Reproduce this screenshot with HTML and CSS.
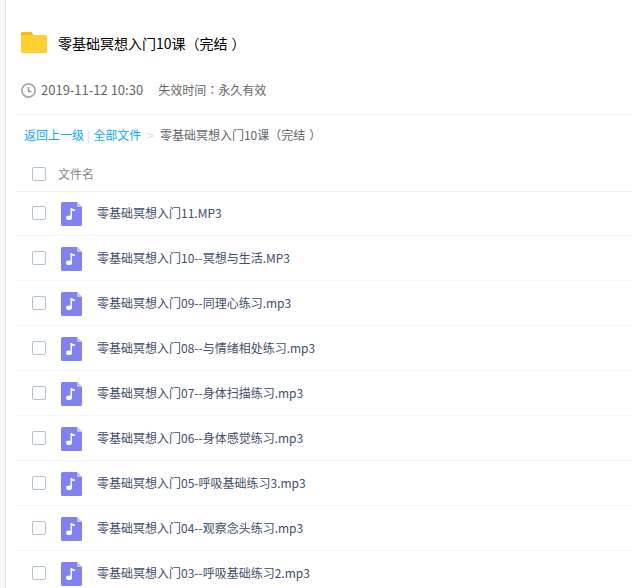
FILE: index.html
```html
<!DOCTYPE html>
<html lang="zh-CN">
<head>
<meta charset="utf-8">
<title>零基础冥想入门10课（完结）</title>
<link rel="stylesheet" href="styles.css">
</head>
<body>
<svg class="defs" aria-hidden="true">
  <symbol id="audio" viewBox="0 0 21 24">
    <path fill="#8181ef" d="M1.5 0H16l5 5v17.5a1.5 1.5 0 0 1-1.5 1.5h-18A1.5 1.5 0 0 1 0 22.500v-21A1.500 1.500 0 0 1 1.500 0z"/>
    <path fill="#c4c4f9" d="M16 0l5 5h-4a1 1 0 0 1-1-1z"/>
    <ellipse cx="8" cy="15.700" rx="3" ry="2.300" fill="#fff"/>
    <path fill="#fff" d="M9.500 6h1.500c.3 1 1.300 1.200 2.800 1.300v1.900c-1.200 0-2.200-.2-2.800-.6V16H9.500z"/>
  </symbol>
</svg>
<main class="page">
  <header class="share">
    <h1 class="title">
      <svg class="folder" viewBox="0 0 26 21" aria-hidden="true"><path fill="#f5ba0c" d="M1.500 0H10.500L12.500 3V6H0V1.500A1.500 1.500 0 0 1 1.500 0z"/><path fill="#ffd02f" d="M0 3H24.500A1.500 1.500 0 0 1 26 4.500v15a1.500 1.500 0 0 1-1.500 1.500h-23A1.500 1.500 0 0 1 0 19.500z"/></svg>
      <span>零基础冥想入门10课（完结<span class="close">）</span></span>
    </h1>
    <div class="meta">
      <svg class="clock" viewBox="0 0 15 15" aria-hidden="true"><circle cx="7.500" cy="7.500" r="6.600" fill="none" stroke="#aaa" stroke-width="1.800"/><path d="M7.500 4v4.500h3" fill="none" stroke="#999" stroke-width="1.600"/></svg>
      <time class="date">2019-11-12 10:30</time>
      <span>失效时间<span class="colon" lang="zh-TW">：</span>永久有效</span>
    </div>
  </header>
  <nav class="crumbs">
    <a href="#">返回上一级</a><span class="bar">|</span><a href="#">全部文件</a><span class="arrow">&gt;</span><span>零基础冥想入门10课（完结<span class="close">）</span></span>
  </nav>
  <div class="head"><input type="checkbox" id="all"><label for="all">文件名</label></div>
  <ul class="files">
    <li><input type="checkbox" id="f11"><svg class="icon" aria-hidden="true"><use href="#audio"/></svg><label for="f11">零基础冥想入门11.MP3</label></li>
    <li><input type="checkbox" id="f10"><svg class="icon" aria-hidden="true"><use href="#audio"/></svg><label for="f10">零基础冥想入门10--冥想与生活.MP3</label></li>
    <li><input type="checkbox" id="f09"><svg class="icon" aria-hidden="true"><use href="#audio"/></svg><label for="f09">零基础冥想入门09--同理心练习.mp3</label></li>
    <li><input type="checkbox" id="f08"><svg class="icon" aria-hidden="true"><use href="#audio"/></svg><label for="f08">零基础冥想入门08--与情绪相处练习.mp3</label></li>
    <li><input type="checkbox" id="f07"><svg class="icon" aria-hidden="true"><use href="#audio"/></svg><label for="f07">零基础冥想入门07--身体扫描练习.mp3</label></li>
    <li><input type="checkbox" id="f06"><svg class="icon" aria-hidden="true"><use href="#audio"/></svg><label for="f06">零基础冥想入门06--身体感觉练习.mp3</label></li>
    <li><input type="checkbox" id="f05"><svg class="icon" aria-hidden="true"><use href="#audio"/></svg><label for="f05">零基础冥想入门05-呼吸基础练习3.mp3</label></li>
    <li><input type="checkbox" id="f04"><svg class="icon" aria-hidden="true"><use href="#audio"/></svg><label for="f04">零基础冥想入门04--观察念头练习.mp3</label></li>
    <li><input type="checkbox" id="f03"><svg class="icon" aria-hidden="true"><use href="#audio"/></svg><label for="f03">零基础冥想入门03--呼吸基础练习2.mp3</label></li>
  </ul>
</main>
</body>
</html>
```
FILE: styles.css
```css
* { box-sizing: border-box; }

body {
  margin: 0;
  overflow: hidden;
  background: #f7f7f7;
  color: #666;
  font: 12px/20px "Noto Sans CJK SC", sans-serif;
}

.defs { display: none; }

.page {
  height: 100vh;
  overflow: hidden;
  margin-left: 5px;
  padding-left: 10px;
  border-left: 1px solid #e0e0e0;
  background: #fff;
}

.share {
  padding: 29px 0 14px 5px;
  border-bottom: 1px solid #f2f2f2;
}

.title {
  display: flex;
  align-items: center;
  gap: 11px;
  height: 27px;
  margin: 0;
  color: #000;
  font-size: 14px;
  font-weight: 400;
}

.folder { width: 26px; height: 21px; }

.close { margin-left: 4px; }

.meta {
  display: flex;
  align-items: center;
  gap: 5px;
  margin-top: 24px;
}

.clock { width: 15px; height: 15px; }

.date {
  margin-right: 10px;
  font-size: 13px;
}

.colon { font-family: "Noto Sans CJK TC", sans-serif; }

.crumbs {
  display: flex;
  height: 42px;
  padding-left: 8px;
  line-height: 40px;
}

.crumbs a { color: #09aaff; text-decoration: none; }
.bar { padding: 0 3px; color: #c4dbfe; }
.arrow { padding: 0 6px; color: #c4dbfe; }

.head,
.files li {
  display: flex;
  align-items: center;
  height: 45px;
  padding-left: 16px;
  border-bottom: 1px solid #f2f6fd;
}

.head {
  gap: 12px;
  height: 35px;
  border-color: #f2f2f2;
  color: #888;
}

.files {
  margin: -1px 0 0;
  padding: 0;
  list-style: none;
  color: #424e67;
}

input {
  appearance: none;
  width: 14px;
  height: 14px;
  margin: 0;
  border: 1px solid #b4c1d1;
  border-radius: 2px;
  background: #fff;
}

.icon {
  width: 21px;
  height: 24px;
  margin: 2px 15px 0;
}
```
